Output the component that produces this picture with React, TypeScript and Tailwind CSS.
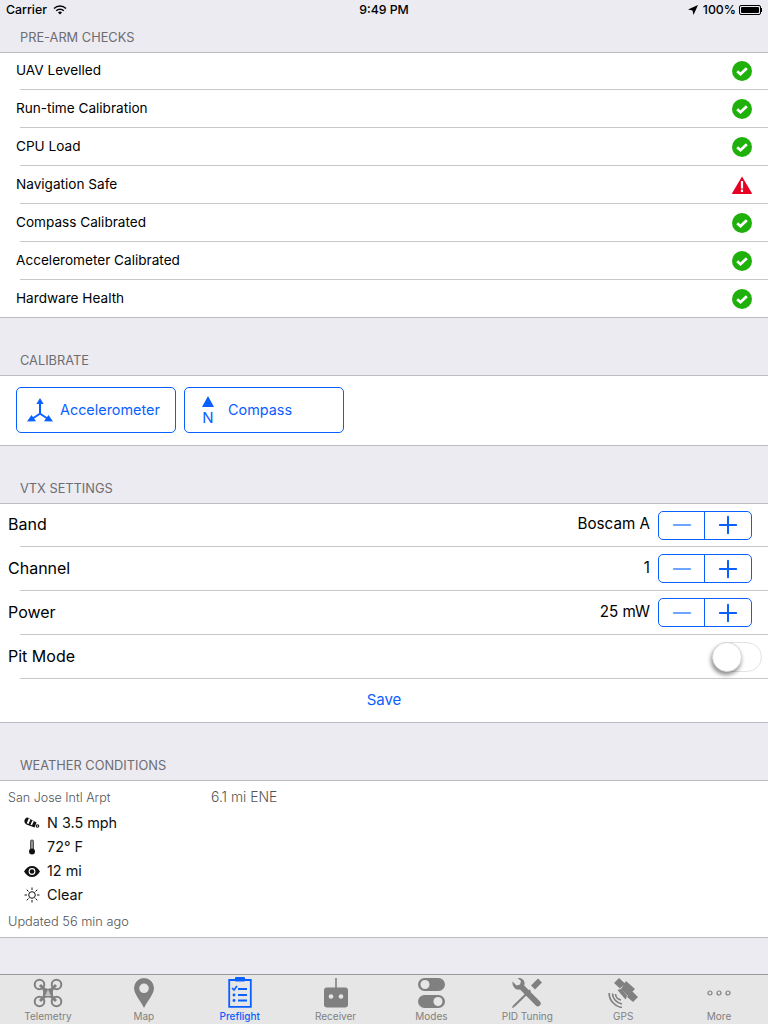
import { Plus, Minus } from "lucide-react";

const BLUE = "#0a60ff";

function CheckIcon() {
  return (
    <svg width="20" height="20" viewBox="0 0 20 20">
      <circle cx="10" cy="10" r="10" fill="#1fb00c" />
      <path d="M5.2 10.2l3.3 3 6.300-6" fill="none" stroke="#fff" strokeWidth="2.800" />
    </svg>
  );
}

function WarnIcon() {
  return (
    <svg width="20" height="18" viewBox="0 0 20 18">
      <path d="M10 0.5L19.8 17a.6.6 0 0 1-.5.9H.7a.6.6 0 0 1-.5-.9z" fill="#e60023" />
      <rect x="8.900" y="5" width="2.200" height="7.500" fill="#fff" />
      <rect x="8.900" y="13.600" width="2.200" height="2.400" fill="#fff" />
    </svg>
  );
}

function SectionHeader({ title, className }: { title: string; className: string }) {
  return (
    <div className={`flex items-end border-b border-[#bcbbc1] pl-5 pb-[7px] text-[12.800px] leading-[15px] text-[#6d6d72] ${className}`}>
      {title}
    </div>
  );
}

function CheckRow({ label, warn, first, last }: { label: string; warn?: boolean; first?: boolean; last?: boolean }) {
  return (
    <div>
      <div className={`pl-4 flex ${first ? "h-[36px]" : "h-[37px]"}`}>
        <div className="flex-1 flex items-center text-[13.600px] pb-px">{label}</div>
        <div className="w-[36px] flex items-center">{warn ? <WarnIcon /> : <CheckIcon />}</div>
      </div>
      <div className={last ? "h-px bg-[#bcbbc1]" : "h-px ml-5 bg-[#c8c7cc]"} />
    </div>
  );
}

function Stepper() {
  return (
    <div className="flex h-[29px] w-[94px] rounded-[5px] border border-[#0a60ff]">
      <div className="w-[46px] flex items-center justify-center border-r border-[#0a60ff]">
        <Minus size={28} color="#6ea6ff" strokeWidth={2} absoluteStrokeWidth />
      </div>
      <div className="flex-1 flex items-center justify-center">
        <Plus size={28} color={BLUE} strokeWidth={2} absoluteStrokeWidth />
      </div>
    </div>
  );
}

function VtxRow({ label, value, first }: { label: string; value: string; first?: boolean }) {
  return (
    <div>
      <div className={`flex items-center pl-2 pr-4 ${first ? "h-[42px]" : "h-[43px]"}`}>
        <div className={`flex-1 text-[16px] ${first ? "pb-[2px]" : "pb-px"}`}>{label}</div>
        <div className={`text-[15.200px] mr-2 ${first ? "pb-[2px]" : ""}`}>{value}</div>
        <Stepper />
      </div>
      <div className="h-px ml-5 bg-[#c8c7cc]" />
    </div>
  );
}

function AccelIcon() {
  return (
    <svg width="28" height="24" viewBox="0 0 28 24" fill={BLUE}>
      <path d="M14 0l3.600 6h-7.200z" />
      <rect x="13" y="5" width="2" height="11" />
      <path d="M14 14.500l-9 6 1 1.500 8-5.300 8 5.300 1-1.500z" />
      <path d="M1 23.500L5.500 17l4.500 6.300z" />
      <path d="M27 23.500L22.500 17 18 23.300z" />
    </svg>
  );
}

function NorthIcon() {
  return (
    <div className="flex flex-col items-center w-[12px] text-[#0a60ff]">
      <svg width="12" height="11" viewBox="0 0 12 11"><path d="M6 0l6 11H0z" fill={BLUE} /></svg>
      <span className="text-[15px] leading-[15px] mt-[3px]">N</span>
    </div>
  );
}

function Wind() {
  return (
    <svg width="16" height="12" viewBox="0 0 16 12">
      <path d="M0.500 5C0 3 1.500 .5 3.500 .5L12.500 5.500 10.500 10.500 2.500 7.500C1.500 7 .8 6 .5 5z" fill="#111" />
      <path d="M4.700 1.500l1.800 1-2 4.600-1.800-.8zM8.300 3.500l1.500.8-1.800 4-1.500-.6z" fill="#fff" />
      <circle cx="13.500" cy="9" r="1.800" fill="#111" />
      <circle cx="13.500" cy="9" r="0.700" fill="#fff" />
    </svg>
  );
}

function Thermo() {
  return (
    <svg width="8" height="16" viewBox="0 0 8 16">
      <rect x="2" y="0.500" width="4" height="11" rx="2" fill="#555" />
      <rect x="3.400" y="2" width="1.200" height="9" fill="#bbb" />
      <circle cx="4" cy="12.600" r="3" fill="#111" />
    </svg>
  );
}

function Eye() {
  return (
    <svg width="16" height="11" viewBox="0 0 16 11">
      <path d="M0 5.500C2.500 1.500 5 0 8 0s5.500 1.500 8 5.500c-2.500 4-5 5.500-8 5.500S2.500 9.500 0 5.500z" fill="#111" />
      <circle cx="8" cy="5.500" r="3.400" fill="#fff" />
      <circle cx="8" cy="5.500" r="2.300" fill="#111" />
    </svg>
  );
}

function Sun() {
  return (
    <svg width="16" height="16" viewBox="0 0 16 16" stroke="#111" fill="none" strokeWidth="1">
      <circle cx="8" cy="8" r="3.300" />
      <path d="M8 0.500v2.500M8 13v2.500M0.500 8h2.500M13 8h2.500M2.700 2.700l1.800 1.800M11.500 11.500l1.800 1.800M13.300 2.700l-1.800 1.800M4.500 11.500l-1.800 1.800" />
    </svg>
  );
}

function WeatherRow({ icon, text }: { icon: React.ReactNode; text: string }) {
  return (
    <div className="flex items-center h-[24px] text-[14.400px] text-[#111]">
      <div className="w-[16px] ml-[24px] mr-[7px] flex justify-center">{icon}</div>
      {text}
    </div>
  );
}

const GREY = "#808080";

function TabDrone() {
  return (
    <svg width="30" height="30" viewBox="0 0 30 30" fill="none" stroke={GREY}>
      <g strokeWidth="2">
        <circle cx="6.500" cy="6.500" r="4.800" />
        <circle cx="23.500" cy="6.500" r="4.800" />
        <circle cx="6.500" cy="23.500" r="4.800" />
        <circle cx="23.500" cy="23.500" r="4.800" />
      </g>
      <path d="M7 7l16 16M23 7L7 23" strokeWidth="3" />
      <path d="M9 9.500c4 1.500 8 1.500 12 0-1.500 4-1.500 7 0 11-4-1.500-8-1.500-12 0 1.500-4 1.500-7 0-11z" fill={GREY} stroke="none" />
      <path d="M15 11.500l3 6.500h-6z" fill="#c4c4c4" stroke="none" />
    </svg>
  );
}

function TabPin() {
  return (
    <svg width="20" height="30" viewBox="0 0 20 30">
      <path fillRule="evenodd" fill={GREY} d="M10 0a10 10 0 0 1 10 10c0 6-6 12-10 20C6 22 0 16 0 10A10 10 0 0 1 10 0zm0 5.500a4.800 4.800 0 1 0 0 9.600 4.800 4.800 0 0 0 0-9.600z" />
    </svg>
  );
}

function TabPreflight() {
  return (
    <svg width="24" height="31" viewBox="0 0 24 31" fill="none" stroke={BLUE}>
      <path d="M7 3H1.200v26.800h21.600V3H17" strokeWidth="1.800" />
      <rect x="7" y="0" width="10" height="4.500" rx="1" fill={BLUE} stroke="none" />
      <path d="M4 11l2 2 3-4" strokeWidth="1.600" />
      <path d="M10 12h9M10 18h9M10 23.500h9" strokeWidth="1.800" />
      <circle cx="6" cy="18" r="1.400" fill={BLUE} stroke="none" />
      <circle cx="6" cy="23.500" r="1.400" fill={BLUE} stroke="none" />
    </svg>
  );
}

function TabReceiver() {
  return (
    <svg width="24" height="30" viewBox="0 0 24 30">
      <rect x="11.200" y="0" width="1.600" height="10" fill={GREY} />
      <rect x="0" y="9.500" width="24" height="20" rx="3" fill={GREY} />
      <circle cx="7" cy="18.500" r="2.300" fill="#e6e6e6" />
      <circle cx="17" cy="18.500" r="2.300" fill="#e6e6e6" />
    </svg>
  );
}

function TabModes() {
  return (
    <svg width="27" height="30" viewBox="0 0 27 30">
      <rect x="0" y="0" width="27" height="13" rx="6.500" fill={GREY} />
      <circle cx="7" cy="6.500" r="4.500" fill="#e6e6e6" />
      <rect x="0" y="17" width="27" height="13" rx="6.500" fill={GREY} />
      <circle cx="20" cy="23.500" r="4.500" fill="#e6e6e6" />
    </svg>
  );
}

function TabTools() {
  return (
    <svg width="30" height="30" viewBox="0 0 30 30">
      <path d="M0.500 3.500L4.500 7.500 8 6.500 9 3 5.500 0C8.500-.5 12 1 12.500 4.500c.2 1.200 0 2-.3 3l15.800 16a2.900 2.900 0 0 1-.2 4 2.900 2.900 0 0 1-4 0L8 11.500C3.500 12.500 0 8.500.5 3.500z" fill={GREY} />
      <path d="M19 7.500L26 0.500l4 4-7 7z" fill={GREY} />
      <path d="M17.500 11.500l1.500 1.500L3 28.500.8 30 0 29.200 1.500 27z" fill={GREY} />
    </svg>
  );
}

function TabGps() {
  return (
    <svg width="30" height="30" viewBox="0 0 30 30">
      <path d="M6 5l5-5 6 5.500-5 5zM13 11l5-8 9 8-7 7zM19 19l5-6 6 6-5 5z" fill={GREY} />
      <path d="M9.500 12a9 9 0 0 1 4-1l5.500 6.500a9 9 0 0 1-1.500 4z" fill={GREY} />
      <path d="M7.500 16c0 3 2.500 5.500 5.500 6M4.500 15.500c0 5 4 9.500 9.500 10.500M1.200 15c-.2 7 5.500 13.500 12.800 14.500" fill="none" stroke={GREY} strokeWidth="1.700" />
    </svg>
  );
}

function TabMore() {
  return (
    <svg width="24" height="6" viewBox="0 0 24 6" fill="none" stroke={GREY} strokeWidth="1.200">
      <circle cx="3" cy="3" r="2" />
      <circle cx="12" cy="3" r="2" />
      <circle cx="21" cy="3" r="2" />
    </svg>
  );
}

function Tab({ icon, label, active }: { icon: React.ReactNode; label: string; active?: boolean }) {
  return (
    <div className={`flex-1 flex flex-col items-center text-[10px] leading-[12px] ${active ? "text-[#0a60ff] font-medium" : "text-[#808080]"}`}>
      <div className="h-[31px] flex items-center justify-center mt-[2px]">{icon}</div>
      <div className="mt-[2px]">{label}</div>
    </div>
  );
}

export default function App() {
  return (
    <div className="w-[768px] h-[1024px] overflow-hidden flex flex-col bg-[#ebebf1] text-black font-['Inter','Liberation_Sans',sans-serif]">
      {/* Status bar */}
      <div className="h-[20px] px-[6px] flex items-center text-[12.300px] font-medium relative">
        <span>Carrier</span>
        <svg width="14" height="10" viewBox="0 0 14 10" className="ml-[6px]" fill="none" stroke="#000" strokeWidth="1.500">
          <path d="M1 3.500a8.500 8.500 0 0 1 12 0M3.200 5.700a5.400 5.400 0 0 1 7.600 0" />
          <path d="M7 9.500L5 7.500a2.800 2.800 0 0 1 4 0z" fill="#000" stroke="none" />
        </svg>
        <span className="absolute left-0 right-0 text-center">9:49 PM</span>
        <div className="ml-auto flex items-center">
          <svg width="10" height="10" viewBox="0 0 10 10"><path d="M10 0L5.500 10 4.500 5.500 0 4.500z" fill="#000" /></svg>
          <span className="ml-[5px]">100%</span>
          <div className="ml-[3px] w-[22px] h-[10px] border border-black rounded-[2px] p-px">
            <div className="w-full h-full bg-black rounded-[1px]" />
          </div>
          <div className="w-px h-[4px] bg-black" />
        </div>
      </div>

      <SectionHeader title="PRE-ARM CHECKS" className="h-[33px]" />
      <div className="bg-white">
        <CheckRow label="UAV Levelled" first />
        <CheckRow label="Run-time Calibration" />
        <CheckRow label="CPU Load" />
        <CheckRow label="Navigation Safe" warn />
        <CheckRow label="Compass Calibrated" />
        <CheckRow label="Accelerometer Calibrated" />
        <CheckRow label="Hardware Health" last />
      </div>

      <SectionHeader title="CALIBRATE" className="h-[58px]" />
      <div className="h-[70px] bg-white border-b border-[#bcbbc1] flex items-center gap-2 pl-4 pb-px">
        <div className="w-[160px] h-[46px] rounded-[5px] border border-[#0a60ff] flex items-center pl-[9px] text-[#0a60ff] text-[14.400px]">
          <AccelIcon />
          <span className="ml-[6px]">Accelerometer</span>
        </div>
        <div className="w-[160px] h-[46px] rounded-[5px] border border-[#0a60ff] flex items-center pl-[17px] text-[#0a60ff] text-[14.400px]">
          <NorthIcon />
          <span className="ml-[14px]">Compass</span>
        </div>
      </div>

      <SectionHeader title="VTX SETTINGS" className="h-[58px]" />
      <div className="bg-white">
        <VtxRow label="Band" value="Boscam A" first />
        <VtxRow label="Channel" value="1" />
        <VtxRow label="Power" value="25 mW" />
        <div className="h-[43px] flex items-center pl-2 pr-[6px]">
          <div className="flex-1 text-[16px] pb-px">Pit Mode</div>
          <div className="w-[50px] h-[30px] rounded-full border border-[#e3e3e3] relative">
            <div className="absolute -left-px -top-px w-[30px] h-[30px] rounded-full bg-white border border-[#d8d8d8] shadow-[-1px_3px_4px_rgba(0,0,0,0.45)]" />
          </div>
        </div>
        <div className="h-px ml-5 bg-[#c8c7cc]" />
        <div className="h-[44px] flex items-center justify-center border-b border-[#bcbbc1] text-[#0a60ff] text-[15px]">Save</div>
      </div>

      <SectionHeader title="WEATHER CONDITIONS" className="h-[58px]" />
      <div className="h-[157px] bg-white border-b border-[#bcbbc1] pt-[8px]">
        <div className="flex items-center h-[18px] pl-2 text-[#555] font-light">
          <span className="w-[203px] text-[12.500px]">San Jose Intl Arpt</span>
          <span className="text-[13.900px] pb-[2px]">6.1 mi ENE</span>
        </div>
        <div className="mt-[4px]">
          <WeatherRow icon={<Wind />} text="N 3.5 mph" />
          <WeatherRow icon={<Thermo />} text="72° F" />
          <WeatherRow icon={<Eye />} text="12 mi" />
          <WeatherRow icon={<Sun />} text="Clear" />
        </div>
        <div className="pl-2 mt-[6px] text-[12.800px] leading-[18px] text-[#555] font-light">Updated 56 min ago</div>
      </div>

      <div className="flex-1" />

      {/* Tab bar */}
      <div className="h-[50px] bg-[#e6e6e6] border-t border-[#9a9a9a] flex pr-px">
        <Tab icon={<TabDrone />} label="Telemetry" />
        <Tab icon={<TabPin />} label="Map" />
        <Tab icon={<TabPreflight />} label="Preflight" active />
        <Tab icon={<TabReceiver />} label="Receiver" />
        <Tab icon={<TabModes />} label="Modes" />
        <Tab icon={<TabTools />} label="PID Tuning" />
        <Tab icon={<TabGps />} label="GPS" />
        <Tab icon={<TabMore />} label="More" />
      </div>
    </div>
  );
}
